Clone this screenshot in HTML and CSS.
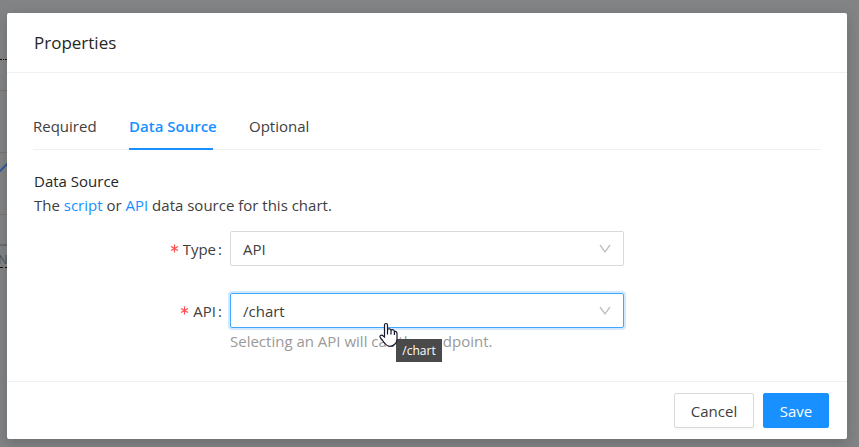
FILE: index.html
```html
<!DOCTYPE html>
<html lang="en">
<head>
<meta charset="utf-8">
<title>Properties</title>
<link rel="stylesheet" href="styles.css">
</head>
<body>
<svg class="backdrop" width="7" height="447" viewBox="0 0 7 447" aria-hidden="true">
  <path d="M0 59.5H2M3 59.5H4M5 59.5H7M0 267.500H3M5 267.500H7" stroke="#111"/>
  <path d="M0 90.500H7M0 152.500H7M0 214.500H7" stroke="#747576"/>
  <path d="M0 245H7" stroke="#6b6c6d" stroke-width="2"/>
  <path d="M-1 172L8 163" stroke="#355b9f" stroke-width="2"/>
  <text x="-2" y="264" class="axis">N</text>
</svg>
<main class="modal">
  <header class="head"><span class="title">Properties</span></header>
  <section class="body">
    <nav class="tabs">
      <span class="tab t1">Required</span>
      <span class="tab t2 active">Data Source</span>
      <span class="tab t3">Optional</span>
    </nav>
    <div class="intro">
      <div class="line strong"><span class="heading">Data Source</span></div>
      <div class="line"><span class="desc">The <a>script</a> or <a>API</a> data source for this chart.</span></div>
    </div>
    <div class="row">
      <label class="label"><svg width="9" height="9" viewBox="0 0 9 9"><path d="M4.500 .5V8.500M1 2.500L8 6.500M8 2.500L1 6.500"/></svg><span class="type">Type</span><i>:</i></label>
      <div class="select"><span class="api">API</span><svg class="chev" width="12" height="10" viewBox="0 0 12 10"><path d="M1 1L6 8L11 1"/></svg></div>
    </div>
    <div class="row second">
      <label class="label"><svg width="9" height="9" viewBox="0 0 9 9"><path d="M4.500 .5V8.500M1 2.500L8 6.500M8 2.500L1 6.500"/></svg><span class="api">API</span><i>:</i></label>
      <div class="select focus"><span class="chart">/chart</span><svg class="chev" width="12" height="10" viewBox="0 0 12 10"><path d="M1 1L6 8L11 1"/></svg></div>
    </div>
    <div class="help"><span class="helptext">Selecting an API will call the endpoint.</span></div>
  </section>
  <footer class="foot">
    <button class="btn cancel"><span>Cancel</span></button>
    <button class="btn save"><span>Save</span></button>
  </footer>
</main>
<div class="tooltip"><span>/chart</span></div>
<svg class="cursor" width="20" height="26" viewBox="0 0 20 26" aria-hidden="true"><path d="M5.500 15V3Q5.500 1.500 7 1.500T8.500 3V8Q9 6.500 10.500 6.800Q12 7 12 8.500Q13 7.200 14.500 8Q15.500 8.500 15.400 9.800Q16.500 9 17.500 10Q18 10.500 18 12V17Q18 20 16 22Q14 24.300 11 24.300Q8 24.300 6 21.500L1.500 16Q.3 14.300 1.500 13.500Q3 12.700 4.300 14Z M8.500 7.500V12.500M12 8V12.500M15.400 9.500V13"/></svg>
</body>
</html>
```
FILE: styles.css
```css
* { box-sizing: border-box; }
body {
  margin: 0; height: 447px; overflow: hidden; position: relative;
  background: #828384; color: #404040;
  font: 15px/24px "Open Sans", "Noto Sans", sans-serif;
}
.backdrop { position: absolute; left: 0; top: 0; }
.axis { font-size: 13px; fill: #555; }
.modal {
  position: relative; width: 840px; height: 426px; margin: 13px 0 0 7px;
  display: flex; flex-direction: column;
  background: #fff; border-radius: 2px; box-shadow: 0 4px 14px rgba(0,0,0,.18);
  float: left;
}
.head { height: 60px; flex: none; border-bottom: 1px solid #f0f0f0; padding: 18px 27px 0; }
.title { font-size: 17px; font-weight: 500; color: #262626; }
.body { flex: 1; padding: 35px 26px 0; }
.tabs { display: flex; height: 42px; border-bottom: 1px solid #f0f0f0; padding-top: 6px; }
.tab { height: 36px; white-space: nowrap; }
.t1 { width: 60px; margin-right: 36px; }
.t2 { width: 84px; margin-right: 36px; }
.active { color: #1890ff; font-weight: 600; border-bottom: 2px solid #1890ff; }
.intro { padding: 19px 0 0 1px; }
.line { height: 24px; white-space: nowrap; }
.strong { font-weight: 500; color: #262626; }
a, .active { color: #1890ff; }
.row { display: flex; margin-top: 14px; height: 35px; }
.second { margin-top: 27px; }
.label { width: 189px; margin-right: 8px; display: flex; justify-content: flex-end; align-items: center; }
.label svg { margin-right: 4px; fill: none; stroke: #ff4d4f; stroke-width: 1.2; }
.label i { font-style: normal; margin-left: 2px; }
.select {
  width: 394px; height: 35px; border: 1px solid #d9d9d9; border-radius: 2px;
  padding: 1px 12px 0; display: flex; align-items: center; justify-content: space-between;
}
.focus { border-color: #40a9ff; box-shadow: 0 0 0 2px rgba(24,144,255,.2); }
.chev { fill: none; stroke: #bfbfbf; stroke-width: 1.3; }
.help { padding: 1px 0 0 197px; color: #999; white-space: nowrap; }
.foot { height: 58px; border-top: 1px solid #f0f0f0; display: flex; justify-content: flex-end; padding: 11px 18px 0; gap: 9px; }
.btn {
  height: 35px; padding: 0; border: 1px solid #d9d9d9; border-radius: 2px;
  font: inherit; background: #fff; color: #404040; box-shadow: 0 2px 0 rgba(0,0,0,.02);
}
.cancel { width: 80px; }
.save { width: 66px; background: #1890ff; border-color: #1890ff; color: #fff; }
.tooltip {
  position: absolute; left: 396px; top: 339px; width: 46px; height: 23px;
  background: #4a4a4a; color: #fff; font-size: 12px; line-height: 23px; text-align: center;
}
.cursor { position: absolute; left: 379px; top: 322px; fill: #fff; stroke: #15172b; stroke-width: 1.2; }
```
